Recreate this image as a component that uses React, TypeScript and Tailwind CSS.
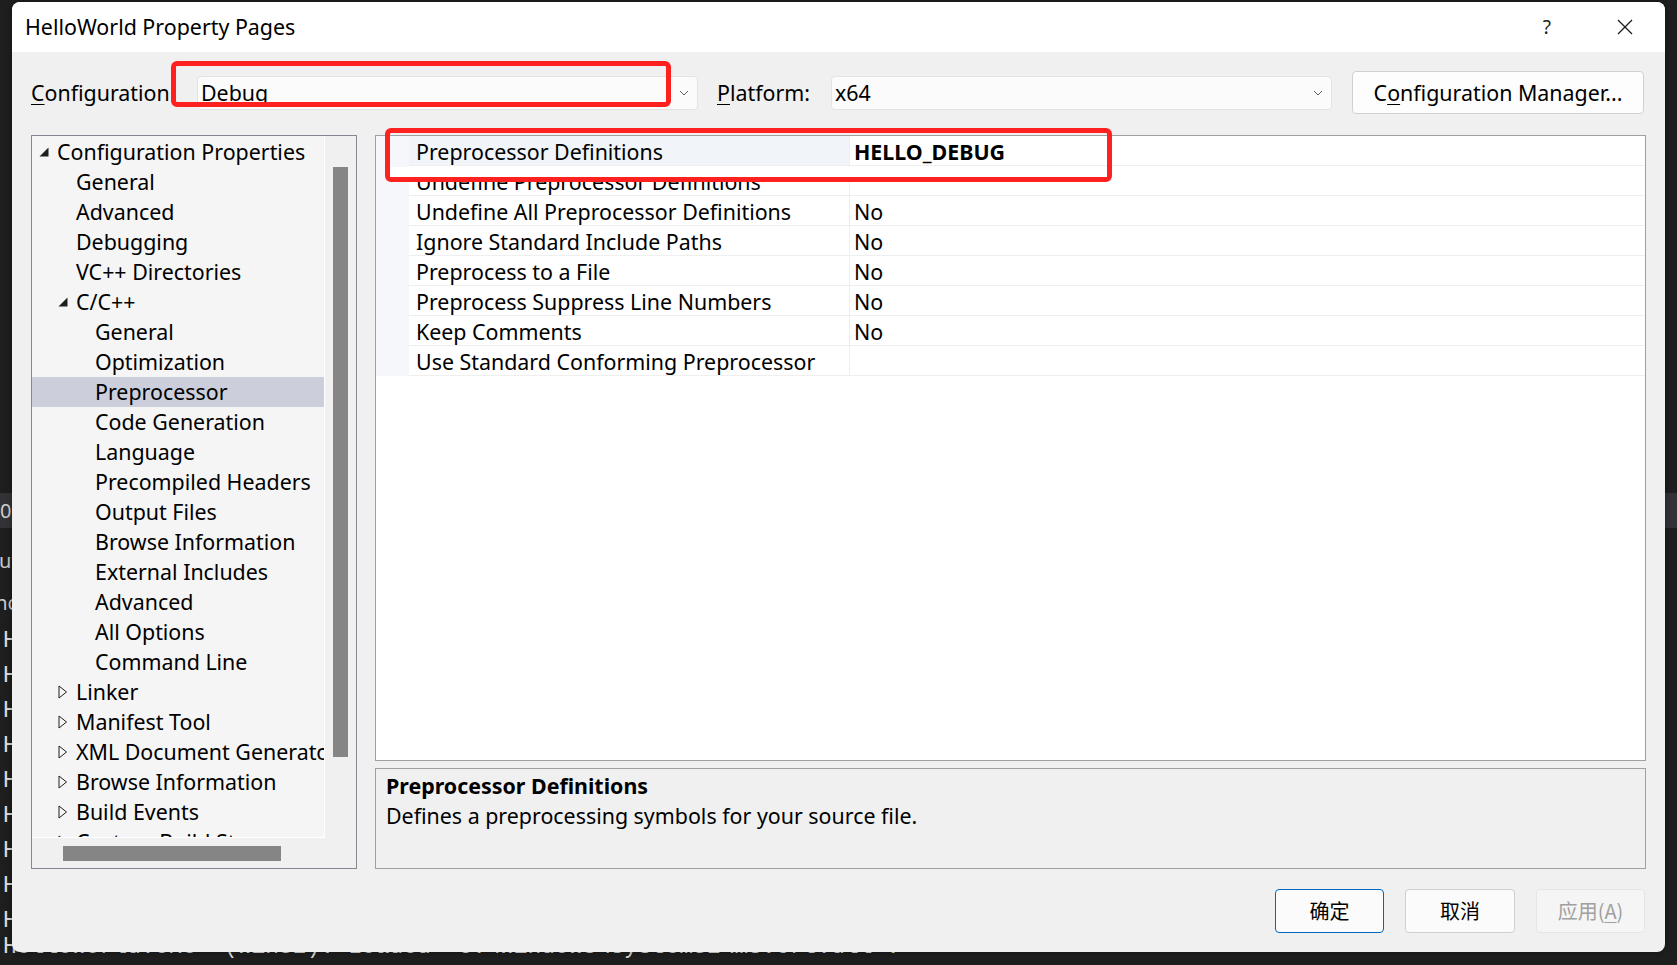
import React from 'react';

type TreeItem = { label: string; level: 0 | 1 | 2; arrow?: 'open' | 'closed'; selected?: boolean };

const tree: TreeItem[] = [
  { label: 'Configuration Properties', level: 0, arrow: 'open' },
  { label: 'General', level: 1 },
  { label: 'Advanced', level: 1 },
  { label: 'Debugging', level: 1 },
  { label: 'VC++ Directories', level: 1 },
  { label: 'C/C++', level: 1, arrow: 'open' },
  { label: 'General', level: 2 },
  { label: 'Optimization', level: 2 },
  { label: 'Preprocessor', level: 2, selected: true },
  { label: 'Code Generation', level: 2 },
  { label: 'Language', level: 2 },
  { label: 'Precompiled Headers', level: 2 },
  { label: 'Output Files', level: 2 },
  { label: 'Browse Information', level: 2 },
  { label: 'External Includes', level: 2 },
  { label: 'Advanced', level: 2 },
  { label: 'All Options', level: 2 },
  { label: 'Command Line', level: 2 },
  { label: 'Linker', level: 1, arrow: 'closed' },
  { label: 'Manifest Tool', level: 1, arrow: 'closed' },
  { label: 'XML Document Generator', level: 1, arrow: 'closed' },
  { label: 'Browse Information', level: 1, arrow: 'closed' },
  { label: 'Build Events', level: 1, arrow: 'closed' },
  { label: 'Custom Build Step', level: 1, arrow: 'closed' },
];

const props: { name: string; value: string; bold?: boolean }[] = [
  { name: 'Preprocessor Definitions', value: 'HELLO_DEBUG', bold: true },
  { name: 'Undefine Preprocessor Definitions', value: '' },
  { name: 'Undefine All Preprocessor Definitions', value: 'No' },
  { name: 'Ignore Standard Include Paths', value: 'No' },
  { name: 'Preprocess to a File', value: 'No' },
  { name: 'Preprocess Suppress Line Numbers', value: 'No' },
  { name: 'Keep Comments', value: 'No' },
  { name: 'Use Standard Conforming Preprocessor', value: '' },
];

const indent: Record<number, string> = { 0: 'w-[7px]', 1: 'w-[26px]', 2: 'w-[45px]' };

function Chevron() {
  return (
    <svg width="10" height="6" viewBox="0 0 10 6" className="shrink-0">
      <polyline points="1,1 5,5 9,1" fill="none" stroke="#5f5f5f" strokeWidth="1" />
    </svg>
  );
}

function Arrow({ kind }: { kind: 'open' | 'closed' }) {
  if (kind === 'open') {
    return (
      <svg width="10" height="10" viewBox="0 0 10 10">
        <polygon points="9.5,0.5 9.5,9.5 0.5,9.5" fill="#1e1e1e" />
      </svg>
    );
  }
  return (
    <svg width="10" height="14" viewBox="0 0 10 14">
      <polygon points="1,1 8.5,7 1,13" fill="none" stroke="#1e1e1e" strokeWidth="1" />
    </svg>
  );
}

export default function App() {
  return (
    <div className="relative w-[1677px] h-[965px] overflow-hidden bg-[#1e1e1e] font-['Noto_Sans','Noto_Sans_CJK_SC',sans-serif] text-black">
      {/* console behind the dialog */}
      <div className="absolute inset-0 flex flex-col">
        <div className="h-[502px]" />
        <div className="h-[35px] bg-[#333337] text-[#d0d0d0] text-[20px] leading-[35px]">0</div>
        <div className="h-[12px]" />
        <div className="text-[#cccccc] text-[20px] leading-[42px] -ml-[13px]">out</div>
        <div className="text-[#cccccc] text-[20px] leading-[42px] -ml-[10px]">inc</div>
        <div className="flex flex-col font-['Liberation_Mono',monospace] text-[23px] leading-[35px] text-[#dcdcdc] pl-[3px] whitespace-pre">
          {Array.from({ length: 9 }).map((_, i) => (
            <div key={i}>H</div>
          ))}
          <div className="-mt-[9px]">HelloWorld.exe' (Win32): Loaded 'C:\Windows\System32\msvcrt.dll'.</div>
        </div>
      </div>

      {/* dialog window */}
      <div className="absolute left-[12px] top-[2px] w-[1653px] h-[950px] rounded-[8px] overflow-hidden bg-[#f0f0f0] flex flex-col shadow-[0_0_6px_rgba(0,0,0,0.4)] text-[21.4px]">
        {/* title bar */}
        <div className="h-[50px] bg-white flex items-center pl-[13px] pr-[32px] shrink-0">
          <span className="leading-none">HelloWorld Property Pages</span>
          <span className="ml-auto text-[19px] text-[#1a1a1a] leading-none">?</span>
          <svg width="16" height="16" viewBox="0 0 16 16" className="ml-[66px]">
            <line x1="1" y1="1" x2="15" y2="15" stroke="#1a1a1a" strokeWidth="1.2" />
            <line x1="15" y1="1" x2="1" y2="15" stroke="#1a1a1a" strokeWidth="1.2" />
          </svg>
        </div>

        {/* configuration row */}
        <div className="mt-[19px] h-[43px] flex items-center pl-[19px] shrink-0">
          <div className="w-[166px] pt-[2px]">
            <u className="underline-offset-[3px] decoration-1">C</u>onfiguration
          </div>
          <div className="w-[501px] h-[34px] bg-[#fbfbfb] border border-[#e3e3e3] rounded-[4px] flex items-center pl-[3px] pr-[8px]">
            <span className="flex-1 pt-[2px]">Debug</span>
            <Chevron />
          </div>
          <div className="w-[133px] pl-[19px] pt-[2px]">
            <u className="underline-offset-[3px] decoration-1">P</u>latform:
          </div>
          <div className="w-[501px] h-[34px] bg-[#fbfbfb] border border-[#e3e3e3] rounded-[4px] flex items-center pl-[3px] pr-[8px]">
            <span className="flex-1 pt-[2px]">x64</span>
            <Chevron />
          </div>
          <div className="ml-[20px] w-[292px] h-[43px] bg-[#fdfdfd] border border-[#d0d0d0] rounded-[4px] flex items-center justify-center pt-[2px]">
            <span>
              C<u className="underline-offset-[3px] decoration-1">o</u>nfiguration Manager...
            </span>
          </div>
        </div>

        {/* panels */}
        <div className="mt-[21px] h-[734px] flex pl-[19px] shrink-0">
          {/* tree */}
          <div className="w-[326px] h-full border border-[#828790] flex flex-col bg-[#f0f0f0]">
            <div className="h-[702px] flex">
              <div className="w-[293px] h-full bg-[#f5f5f5] border-r border-b border-white overflow-hidden pt-[1px]">
                {tree.map((t, i) => (
                  <div
                    key={i}
                    className={`h-[30px] flex items-center whitespace-nowrap ${t.selected ? 'bg-[#cccedb]' : ''}`}
                  >
                    <div className={`${indent[t.level]} shrink-0`} />
                    <div className="w-[18px] shrink-0 flex items-center">{t.arrow && <Arrow kind={t.arrow} />}</div>
                    <span className="pt-[1px]">{t.label}</span>
                  </div>
                ))}
              </div>
              <div className="flex-1 h-full pl-[8px] pt-[31px]">
                <div className="w-[15px] h-[590px] bg-[#858585]" />
              </div>
            </div>
            <div className="flex-1 pl-[31px] pt-[8px]">
              <div className="w-[218px] h-[15px] bg-[#858585]" />
            </div>
          </div>

          {/* right side */}
          <div className="ml-[18px] w-[1271px] h-full flex flex-col">
            <div className="h-[626px] bg-white border border-[#a0a0a0] flex flex-col">
              {props.map((p, i) => (
                <div key={i} className="h-[30px] flex shrink-0">
                  <div className="w-[33px] bg-[#f5f7fa] shrink-0" />
                  <div
                    className={`w-[441px] shrink-0 border-b border-r border-[#efefef] pl-[7px] pt-[4px] flex items-center whitespace-nowrap ${i === 0 ? 'bg-[#f1f4f9]' : ''}`}
                  >
                    {p.name}
                  </div>
                  <div className={`flex-1 border-b border-[#efefef] pl-[4px] pt-[4px] flex items-center ${p.bold ? 'font-bold' : ''}`}>
                    {p.value}
                  </div>
                </div>
              ))}
            </div>
            <div className="mt-[7px] h-[101px] border border-[#a0a0a0] bg-[#f0f0f0] pl-[10px] pt-[3px]">
              <div className="font-bold leading-[28px]">Preprocessor Definitions</div>
              <div className="leading-[28px] mt-[2px]">Defines a preprocessing symbols for your source file.</div>
            </div>
          </div>
        </div>

        {/* buttons */}
        <div className="mt-[20px] h-[44px] flex justify-end gap-[21px] pr-[20px] shrink-0 font-['Noto_Sans_CJK_SC','Noto_Sans',sans-serif] text-[20px]">
          <div className="w-[109px] h-[44px] rounded-[4px] border border-[#0067c0] bg-[#fbfbfb] flex items-center justify-center">确定</div>
          <div className="w-[110px] h-[44px] rounded-[4px] border border-[#d0d0d0] bg-[#fbfbfb] flex items-center justify-center">取消</div>
          <div className="w-[109px] h-[44px] rounded-[4px] border border-[#e5e5e5] bg-[#f5f5f5] text-[#a0a0a0] flex items-center justify-center">
            应用(<u className="underline-offset-[3px] decoration-1">A</u>)
          </div>
        </div>
      </div>

      {/* annotation boxes */}
      <div className="absolute left-[171px] top-[61px] w-[500px] h-[46px] border-[5px] border-[#ff2020] rounded-[6px]" />
      <div className="absolute left-[385px] top-[128px] w-[727px] h-[54px] border-[5px] border-[#ff2020] rounded-[6px]">
        <div className="absolute left-0 right-0 bottom-0 h-[10px] bg-white" />
      </div>
    </div>
  );
}
